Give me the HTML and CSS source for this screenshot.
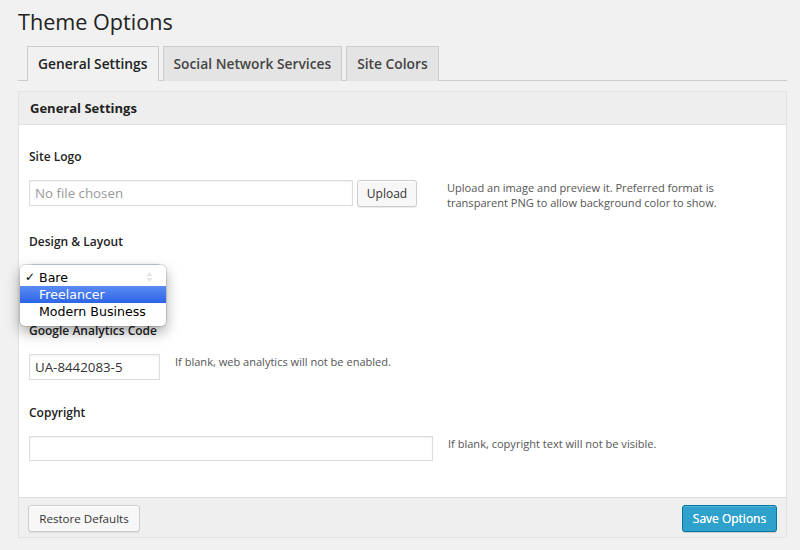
FILE: index.html
```html
<!DOCTYPE html>
<html lang="en">
<head>
<meta charset="utf-8">
<title>Theme Options</title>
<link rel="stylesheet" href="styles.css">
</head>
<body>
<div class="wrap">
  <h1 class="page-title">Theme Options</h1>
  <nav class="tabs">
    <a class="tab active">General Settings</a>
    <a class="tab">Social Network Services</a>
    <a class="tab">Site Colors</a>
  </nav>
  <div class="panel">
    <div class="panel-head">General Settings</div>
    <div class="panel-body">
      <div class="field field-logo">
        <div class="label">Site Logo</div>
        <div class="row">
          <div class="input input-file placeholder">No file chosen</div>
          <button class="btn btn-upload">Upload</button>
          <p class="help help-wide">Upload an image and preview it. Preferred format is<br>transparent PNG to allow background color to show.</p>
        </div>
      </div>
      <div class="field field-design">
        <div class="label">Design &amp; Layout</div>
        <div class="select-wrap">
          <div class="select"></div>
          <ul class="popup">
            <li class="opt"><span class="check">✓</span>Bare<svg class="arrows" width="7" height="12" viewBox="0 0 7 12"><path d="M3.5 1 L6.5 5 H0.5 Z M3.5 11 L6.5 7 H0.5 Z" fill="#e6e6e6"/></svg></li>
            <li class="opt hl">Freelancer</li>
            <li class="opt">Modern Business</li>
          </ul>
        </div>
      </div>
      <div class="field field-ga">
        <div class="label">Google Analytics Code</div>
        <div class="row">
          <div class="input input-ga">UA-8442083-5</div>
          <p class="help">If blank, web analytics will not be enabled.</p>
        </div>
      </div>
      <div class="field field-copy">
        <div class="label">Copyright</div>
        <div class="row">
          <div class="input input-copy"></div>
          <p class="help">If blank, copyright text will not be visible.</p>
        </div>
      </div>
    </div>
    <div class="panel-foot">
      <button class="btn btn-restore">Restore Defaults</button>
      <button class="btn btn-primary">Save Options</button>
    </div>
  </div>
</div>
</body>
</html>
```

FILE: styles.css
```css
* { box-sizing: border-box; }

body {
  margin: 0;
  background: #f1f1f1;
  font-family: "Open Sans", "DejaVu Sans", sans-serif;
  color: #222;
}

.wrap {
  padding: 7px 13px 0 18px;
}

.page-title {
  margin: 0;
  font-size: 21.6px;
  line-height: 29px;
  font-weight: 400;
  color: #222;
}

.tabs {
  display: flex;
  align-items: flex-end;
  margin-top: 10px;
  padding-left: 9px;
  border-bottom: 1px solid #ccc;
}

.tab {
  display: block;
  margin-right: 4px;
  margin-bottom: -1px;
  padding: 5px 10px;
  border: 1px solid #ccc;
  border-bottom: none;
  background: #e4e4e4;
  font-size: 13.8px;
  font-weight: 600;
  line-height: 24px;
  color: #444;
}

.tab.active {
  background: #f1f1f1;
  color: #222;
}

.panel {
  margin-top: 10px;
  border: 1px solid #e2e2e2;
  background: #fff;
  box-shadow: 0 1px 1px rgba(0, 0, 0, 0.04);
}

.panel-head {
  height: 33px;
  padding: 0 11px;
  border-bottom: 1px solid #e2e2e2;
  background: #eeeeee;
  font-size: 13px;
  font-weight: 700;
  line-height: 32px;
  color: #222;
}

.panel-body {
  padding: 23px 10px 36px;
}

.label {
  font-size: 12px;
  font-weight: 600;
  line-height: 18px;
  margin-bottom: 14px;
  color: #222;
}

.field-logo { margin-bottom: 23px; }
.field-design { margin-bottom: 31px; }
.field-ga { margin-bottom: 24px; }

.row {
  display: flex;
  align-items: flex-start;
}

.input {
  height: 26px;
  padding: 0 5px;
  border: 1px solid #dddddd;
  background: #fff;
  box-shadow: inset 0 1px 2px rgba(0, 0, 0, 0.07);
  font-size: 13.3px;
  line-height: 24px;
  color: #333;
}

.input-file { width: 324px; }
.input-ga { width: 131px; }
.input-copy { width: 404px; height: 25px; }

.placeholder { color: #999; }

.help {
  margin: 0 0 0 15px;
  font-size: 11.05px;
  line-height: 15px;
  color: #555;
}

.help-wide { margin-left: 30px; }

.btn {
  height: 27px;
  padding: 0 10px;
  border: 1px solid #cccccc;
  border-radius: 3px;
  background: #f7f7f7;
  box-shadow: inset 0 1px 0 #fff, 0 1px 0 rgba(0, 0, 0, 0.08);
  font-family: "Open Sans", "DejaVu Sans", sans-serif;
  font-size: 12px;
  line-height: 25px;
  color: #333;
}

.btn-upload {
  margin-left: 4px;
  width: 60px;
  padding: 0;
}

.btn-restore {
  width: 112px;
  padding: 0;
  font-size: 11.6px;
}

.btn-primary {
  border-color: #0074a2;
  background: #2ea2cc;
  box-shadow: inset 0 1px 0 rgba(120, 200, 230, 0.5), 0 1px 0 rgba(0, 0, 0, 0.15);
  color: #fff;
  text-shadow: 0 0 0.4px #fff;
  width: 95px;
  padding: 0;
}

.select-wrap {
  position: relative;
}

.select {
  width: 130px;
  height: 26px;
  margin-left: 1px;
  border: 1px solid #5b9dd9;
  border-radius: 3px;
  background: #fff;
  box-shadow: 0 0 2px rgba(30, 140, 190, 0.8);
}

.popup {
  position: absolute;
  left: -9px;
  top: 0;
  width: 146px;
  margin: 0;
  padding: 4px 0 6px;
  list-style: none;
  background: #fff;
  border-radius: 5px;
  box-shadow: 0 0 0 1px rgba(0, 0, 0, 0.12), 0 6px 14px rgba(0, 0, 0, 0.35);
  font-family: "DejaVu Sans", sans-serif;
  font-size: 12.6px;
  line-height: 17px;
  color: #000;
}

.opt {
  position: relative;
  height: 17px;
  padding-left: 19px;
}

.check {
  position: absolute;
  left: 5px;
  top: 0;
  font-size: 12px;
}

.arrows {
  position: absolute;
  right: 13px;
  top: 2px;
}

.opt.hl {
  background: linear-gradient(#5a8cf4, #2d64e6);
  color: #fff;
}

.panel-foot {
  display: flex;
  justify-content: space-between;
  padding: 7px 9px 5px;
  border-top: 1px solid #dedede;
  background: #efefef;
}
```
